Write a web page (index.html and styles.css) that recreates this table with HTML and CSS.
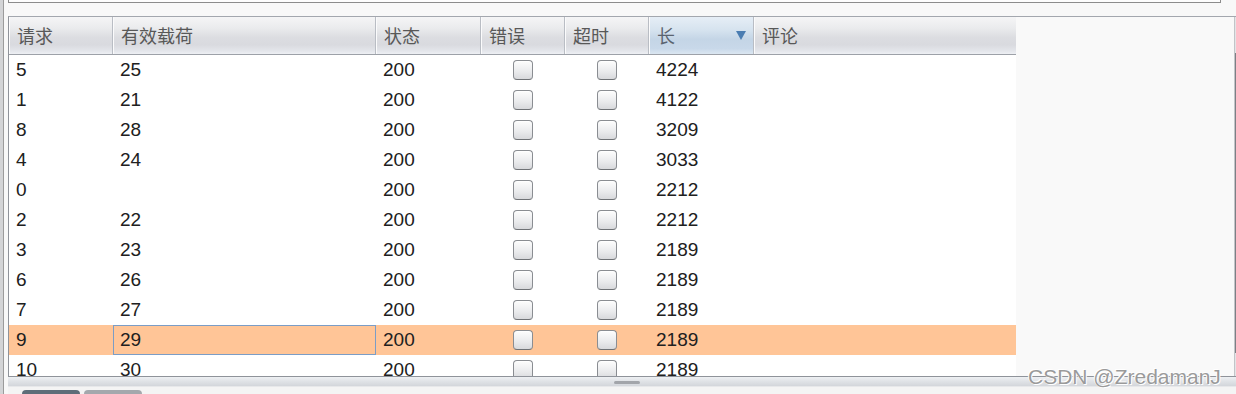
FILE: index.html
```html
<!DOCTYPE html>
<html lang="zh-CN">
<head>
<meta charset="utf-8">
<title>攻击结果</title>
<link rel="stylesheet" href="styles.css">
</head>
<body>
<div class="page">
  <div class="edge"></div>
  <div class="main">
    <div class="topbox"></div>
    <div class="scrollpane">
      <div class="results">
        <div class="thead">
          <div class="th">请求</div>
          <div class="th">有效载荷</div>
          <div class="th">状态</div>
          <div class="th">错误</div>
          <div class="th">超时</div>
          <div class="th sorted"><span>长</span><span class="arrow"></span></div>
          <div class="th last">评论</div>
        </div>
        <div class="tbody">
          <div class="tr"><div class="td">5</div><div class="td">25</div><div class="td">200</div><div class="td cb"><span class="box"></span></div><div class="td cb"><span class="box"></span></div><div class="td">4224</div><div class="td"></div></div>
          <div class="tr"><div class="td">1</div><div class="td">21</div><div class="td">200</div><div class="td cb"><span class="box"></span></div><div class="td cb"><span class="box"></span></div><div class="td">4122</div><div class="td"></div></div>
          <div class="tr"><div class="td">8</div><div class="td">28</div><div class="td">200</div><div class="td cb"><span class="box"></span></div><div class="td cb"><span class="box"></span></div><div class="td">3209</div><div class="td"></div></div>
          <div class="tr"><div class="td">4</div><div class="td">24</div><div class="td">200</div><div class="td cb"><span class="box"></span></div><div class="td cb"><span class="box"></span></div><div class="td">3033</div><div class="td"></div></div>
          <div class="tr"><div class="td">0</div><div class="td"></div><div class="td">200</div><div class="td cb"><span class="box"></span></div><div class="td cb"><span class="box"></span></div><div class="td">2212</div><div class="td"></div></div>
          <div class="tr"><div class="td">2</div><div class="td">22</div><div class="td">200</div><div class="td cb"><span class="box"></span></div><div class="td cb"><span class="box"></span></div><div class="td">2212</div><div class="td"></div></div>
          <div class="tr"><div class="td">3</div><div class="td">23</div><div class="td">200</div><div class="td cb"><span class="box"></span></div><div class="td cb"><span class="box"></span></div><div class="td">2189</div><div class="td"></div></div>
          <div class="tr"><div class="td">6</div><div class="td">26</div><div class="td">200</div><div class="td cb"><span class="box"></span></div><div class="td cb"><span class="box"></span></div><div class="td">2189</div><div class="td"></div></div>
          <div class="tr"><div class="td">7</div><div class="td">27</div><div class="td">200</div><div class="td cb"><span class="box"></span></div><div class="td cb"><span class="box"></span></div><div class="td">2189</div><div class="td"></div></div>
          <div class="tr selected"><div class="td">9</div><div class="td focus">29</div><div class="td">200</div><div class="td cb"><span class="box"></span></div><div class="td cb"><span class="box"></span></div><div class="td">2189</div><div class="td"></div></div>
          <div class="tr"><div class="td">10</div><div class="td">30</div><div class="td">200</div><div class="td cb"><span class="box"></span></div><div class="td cb"><span class="box"></span></div><div class="td">2189</div><div class="td"></div></div>
        </div>
      </div>
      <div class="filler"></div>
      <div class="vscroll"><span class="thumb"></span></div>
    </div>
    <div class="divider"><span class="grip"></span></div>
    <div class="tabs">
      <span class="tab active"></span>
      <span class="tab"></span>
    </div>
  </div>
  <div class="watermark">CSDN @ZredamanJ</div>
</div>
</body>
</html>
```

FILE: styles.css
```css
html, body {
  margin: 0;
  padding: 0;
}

body {
  background: #f8f8f8;
  font-family: "Liberation Sans", "Noto Sans CJK SC", sans-serif;
  overflow: hidden;
}

.page {
  position: relative;
  display: flex;
  width: 1236px;
  height: 394px;
  overflow: hidden;
}

/* neighbouring panel edge on the far left */
.edge {
  width: 3px;
  background: #d3d4d6;
  border-right: 1px solid #9b9b9b;
}

.main {
  flex: 1;
  display: flex;
  flex-direction: column;
  padding-left: 4px;
  min-width: 0;
}

/* bottom of the request editor box above the table */
.topbox {
  height: 2px;
  margin-right: 15px;
  border: 1px solid #8c8c8c;
  border-top: none;
  background: #fdfdfd;
  flex: none;
}

.scrollpane {
  margin-top: 13px;
  height: 359px;
  display: flex;
  border-top: 1px solid #a3a7ae;
  border-bottom: 1px solid #8f939a;
  border-left: 1px solid #8f939a;
  flex: none;
}

.results {
  width: 1007px;
  display: flex;
  flex-direction: column;
  flex: none;
}

.thead,
.tr {
  display: grid;
  grid-template-columns: 104px 263px 105px 84px 84px 105px 262px;
}

.thead {
  height: 37px;
  border-bottom: 1px solid #9da1a8;
  border-right: 1px solid #9da1a8;
  box-sizing: content-box;
  flex: none;
}

.th {
  display: flex;
  align-items: center;
  justify-content: space-between;
  padding: 0 7px 1px 8px;
  font-family: "Noto Sans CJK SC", sans-serif;
  font-size: 18px;
  color: #585858;
  background: linear-gradient(#f5f5f6 0%, #eaebed 30%, #dcdde1 55%, #d9dadf 75%, #e4e6eb 92%, #eef0f4 100%);
  border-right: 1px solid #b9bdc4;
  box-shadow: inset 1px 0 0 #fbfbfc;
}

.th.last {
  border-right: none;
}

.th.sorted {
  background: linear-gradient(#e6eef6 0%, #d6e3ef 35%, #c4d5e6 60%, #c8d8e9 85%, #dbe6f1 100%);
  color: #5a6470;
}

.arrow {
  width: 0;
  height: 0;
  border-left: 5px solid transparent;
  border-right: 5px solid transparent;
  border-top: 9px solid #4a7db2;
}

.tbody {
  flex: 1;
  background: #ffffff;
  overflow: hidden;
}

.tr {
  height: 30px;
  font-size: 19px;
  color: #202020;
}

.tr.selected {
  background: #ffc597;
}

.td {
  line-height: 30px;
  padding-left: 7px;
  white-space: nowrap;
}

.td.focus {
  border: 1px solid #7b9dc6;
  line-height: 28px;
  padding-left: 6px;
}

.td.cb {
  display: flex;
  align-items: center;
  justify-content: center;
  padding: 0;
}

.box {
  width: 18px;
  height: 18px;
  border: 1px solid #8a8d92;
  border-bottom-color: #6f7276;
  border-radius: 4px;
  background: linear-gradient(#fdfdfd, #e9eaec 60%, #d8d9dc);
  box-shadow: inset 0 1px 0 #ffffff;
}

.filler {
  flex: 1;
  background: #f9f9f9;
}

.vscroll {
  width: 1px;
  border-left: 1px solid #c2c4c8;
  background: #e4e5e7;
  display: flex;
  flex-direction: column;
  padding-top: 36px;
}

.thumb {
  display: block;
  height: 300px;
  background: #7d8085;
}

/* split pane divider under the table */
.divider {
  height: 10px;
  display: flex;
  justify-content: center;
  padding-top: 4px;
  box-sizing: border-box;
  background: linear-gradient(#eef0f3, #dfe2e6 50%, #d3d6db);
  border-bottom: 1px solid #e7e8ea;
  flex: none;
}

.grip {
  width: 26px;
  height: 3px;
  margin-left: 10px;
  border-radius: 2px;
  background: #a2a5aa;
}

.tabs {
  flex: 1;
  display: flex;
  align-items: flex-end;
  gap: 4px;
  padding-left: 14px;
  background: #f4f4f4;
}

.tab {
  width: 58px;
  height: 4px;
  border-radius: 5px 5px 0 0;
  background: #a4a8ad;
}

.tab.active {
  background: #5e6d79;
}

.watermark {
  position: absolute;
  left: 1028px;
  top: 365px;
  font-family: "Liberation Sans", sans-serif;
  font-size: 21px;
  color: #9a9a9a;
  text-shadow: 0 0 1px #ffffff, 1px 1px 0 #ffffff, -1px -1px 0 #ffffff;
  white-space: nowrap;
}
```
